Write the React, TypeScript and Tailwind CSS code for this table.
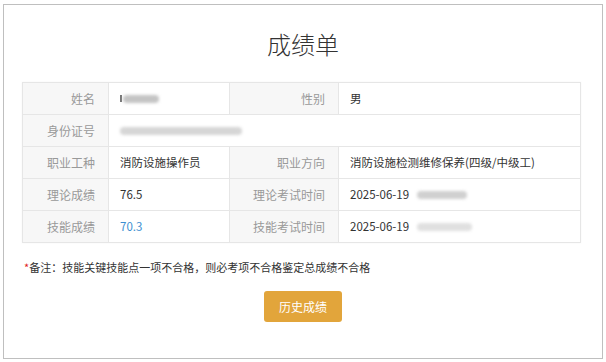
import React from "react";

const font = { fontFamily: '"Microsoft YaHei", "Noto Sans CJK SC", "Noto Sans", sans-serif' };

function Label({ children }: { children: React.ReactNode }) {
  return (
    <div className="h-[31px] bg-[#f7f7f7] border-r border-[#e6e6e6] flex items-center justify-end pr-[13px] text-[12px] text-[#999]">
      {children}
    </div>
  );
}

function Value({ children, last, blue }: { children?: React.ReactNode; last?: boolean; blue?: boolean }) {
  return (
    <div
      className={`h-[31px] bg-white flex items-center pl-[11px] text-[11.5px] ${blue ? "text-[#3d8fd1]" : "text-[#333]"} ${last ? "" : "border-r border-[#e6e6e6]"}`}
    >
      {children}
    </div>
  );
}

function Blur({ w, tone = "bg-[#c9c9c9]" }: { w: string; tone?: string }) {
  return <span className={`inline-block h-[8px] ${w} ${tone} blur-[1.5px] rounded-sm`} />;
}

export default function App() {
  const rowBorder = "border-b border-[#e6e6e6]";
  return (
    <div className="w-[606px] h-[362px] bg-white pt-[4px] pl-[3px]" style={font}>
      <div className="w-[600px] h-[355px] border border-[#bfbfbf] flex flex-col">
        <div className="h-[77px] flex items-center justify-center text-[24px] font-light text-[#333]">成绩单</div>
        <div className="ml-[18px] w-[559px] border border-[#e6e6e6] shadow-[0_0_2px_rgba(0,0,0,0.04)]">
          <div className={`grid grid-cols-[86px_121px_109px_241px] ${rowBorder}`}>
            <Label>姓名</Label>
            <Value>
              <span className="inline-block w-[2px] h-[7px] bg-[#777] mr-[1px] blur-[0.5px]" />
              <Blur w="w-[36px]" tone="bg-[#c4c4c4]" />
            </Value>
            <Label>性别</Label>
            <Value last>男</Value>
          </div>
          <div className={`grid grid-cols-[86px_471px] ${rowBorder}`}>
            <Label>身份证号</Label>
            <Value last>
              <Blur w="w-[122px]" tone="bg-[#d6d6d6]" />
            </Value>
          </div>
          <div className={`grid grid-cols-[86px_121px_109px_241px] ${rowBorder}`}>
            <Label>职业工种</Label>
            <Value>消防设施操作员</Value>
            <Label>职业方向</Label>
            <Value last>消防设施检测维修保养(四级/中级工)</Value>
          </div>
          <div className={`grid grid-cols-[86px_121px_109px_241px] ${rowBorder}`}>
            <Label>理论成绩</Label>
            <Value>76.5</Value>
            <Label>理论考试时间</Label>
            <Value last>
              <span>2025-06-19</span>
              <span className="ml-[8px] flex">
                <Blur w="w-[50px]" tone="bg-[#d0d0d0]" />
              </span>
            </Value>
          </div>
          <div className="grid grid-cols-[86px_121px_109px_241px]">
            <Label>技能成绩</Label>
            <Value blue>70.3</Value>
            <Label>技能考试时间</Label>
            <Value last>
              <span>2025-06-19</span>
              <span className="ml-[8px] flex">
                <Blur w="w-[55px]" tone="bg-[#e0e0e0]" />
              </span>
            </Value>
          </div>
        </div>
        <div className="mt-[16px] ml-[20px] h-[16px] flex items-center text-[11px] text-[#333]">
          <span className="text-[#e02020]">*</span>备注：技能关键技能点一项不合格，则必考项不合格鉴定总成绩不合格
        </div>
        <div className="mt-[16px] flex justify-center">
          <button className="w-[78px] h-[31px] rounded-[3px] bg-[#e2a53b] text-white text-[12px] flex items-center justify-center">
            历史成绩
          </button>
        </div>
      </div>
    </div>
  );
}
